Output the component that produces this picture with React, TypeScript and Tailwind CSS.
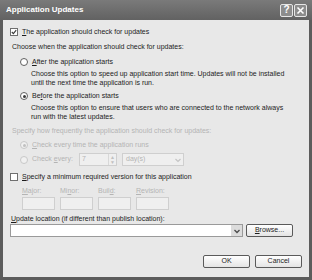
import React from 'react';

const font = { fontFamily: '"Liberation Sans", Arial, sans-serif' };

const Check = ({ checked, disabled }: { checked?: boolean; disabled?: boolean }) => (
  <span
    className={`flex h-[8px] w-[8px] shrink-0 items-center justify-center border ${
      disabled ? 'border-[#c4c4c4] bg-[#f2f2f2]' : 'border-[#6f6f6f] bg-white'
    }`}
  >
    {checked && (
      <svg width="6" height="6" viewBox="0 0 6 6">
        <path d="M0.8 3 L2.4 4.6 L5.2 1.2" fill="none" stroke="#3a3a3a" strokeWidth="1.1" />
      </svg>
    )}
  </span>
);

const Radio = ({ checked, disabled }: { checked?: boolean; disabled?: boolean }) => (
  <span
    className={`flex h-[8px] w-[8px] shrink-0 items-center justify-center rounded-full border ${
      disabled ? 'border-[#c8c8c8] bg-[#f0f0f0]' : 'border-[#5f5f5f] bg-white'
    }`}
  >
    {checked && (
      <span className={`h-[3px] w-[3px] rounded-full ${disabled ? 'bg-[#c0c0c0]' : 'bg-[#3a3a3a]'}`} />
    )}
  </span>
);

const Box = ({ w, children }: { w: string; children?: React.ReactNode }) => (
  <div className={`${w} h-[13px] border border-[#cfcfcf] bg-[#efefef]`}>{children}</div>
);

export default function App() {
  return (
    <div className="flex h-[280px] w-[312px] flex-col bg-[#5c5c5c] text-[7px] text-[#1c1c1c]" style={font}>
      {/* title bar */}
      <div className="flex h-[20px] shrink-0 items-center bg-gradient-to-b from-[#7a7a7a] to-[#626262] pl-[6px] pr-[5px]">
        <span className="text-[8px] font-bold text-white">Application Updates</span>
        <div className="ml-auto flex gap-[1px]">
          <div className="flex h-[13px] w-[13px] items-center justify-center rounded-[2px] border border-[#e6e6e6] bg-[#8c8c8c] text-[10px] font-bold leading-none text-white">
            ?
          </div>
          <div className="flex h-[13px] w-[13px] items-center justify-center rounded-[2px] border border-[#e6e6e6] bg-[#8c8c8c]">
            <svg width="9" height="9" viewBox="0 0 9 9">
              <path d="M1.5 1.5 L7.5 7.5 M7.5 1.5 L1.5 7.5" stroke="white" strokeWidth="1.6" />
            </svg>
          </div>
        </div>
      </div>

      {/* body */}
      <div className="mx-[3px] mb-[3px] flex flex-1 flex-col bg-[#e8e8e8] pl-[7px] pr-[4px]">
        <div className="mt-[7px] flex h-[10px] items-center gap-[4px]">
          <Check checked />
          <span>
            <u>T</u>he application should check for updates
          </span>
        </div>

        <div className="ml-[2px] mt-[5px] flex h-[10px] items-center">Choose when the application should check for updates:</div>

        <div className="ml-[10px] mt-[5px] flex h-[10px] items-center gap-[4px]">
          <Radio />
          <span>
            <u>A</u>fter the application starts
          </span>
        </div>
        <div className="ml-[21px] mt-[2px] leading-[9px]">
          Choose this option to speed up application start time. Updates will not be installed
          <br />
          until the next time the application is run.
        </div>

        <div className="ml-[10px] mt-[4px] flex h-[10px] items-center gap-[4px]">
          <Radio checked />
          <span>
            Be<u>f</u>ore the application starts
          </span>
        </div>
        <div className="ml-[21px] mt-[2px] leading-[9px]">
          Choose this option to ensure that users who are connected to the network always
          <br />
          run with the latest updates.
        </div>

        <div className="ml-[2px] mt-[5px] flex h-[10px] items-center text-[#b4b4b4]">
          Specify how frequently the application should check for updates:
        </div>

        <div className="ml-[10px] mt-[4px] flex h-[10px] items-center gap-[4px] text-[#b4b4b4]">
          <Radio checked disabled />
          <span>
            <u>C</u>heck every time the application runs
          </span>
        </div>

        <div className="ml-[10px] mt-[3px] flex h-[13px] items-center text-[#b4b4b4]">
          <Radio disabled />
          <span className="ml-[4px] w-[47px]">
            Check <u>e</u>very:
          </span>
          <div className="flex h-[13px] w-[38px] items-center border border-[#cfcfcf] bg-[#efefef] pl-[2px]">
            <span className="flex-1">7</span>
            <div className="flex h-full w-[8px] flex-col items-center justify-center border-l border-[#d8d8d8] text-[5px] leading-[5px] text-[#c0c0c0]">
              <span>▲</span>
              <span>▼</span>
            </div>
          </div>
          <div className="ml-[5px] flex h-[13px] w-[62px] items-center border border-[#cfcfcf] bg-[#efefef] pl-[3px]">
            <span className="flex-1">day(s)</span>
            <svg width="8" height="8" viewBox="0 0 8 8" className="mr-[1px]">
              <path d="M1.5 3 L4 5.5 L6.5 3" fill="none" stroke="#c4c4c4" strokeWidth="1.2" />
            </svg>
          </div>
        </div>

        <div className="mt-[6px] flex h-[10px] items-center gap-[4px]">
          <Check />
          <span>
            <u>S</u>pecify a minimum required version for this application
          </span>
        </div>

        <div className="ml-[12px] mt-[4px] flex h-[10px] items-center text-[#b4b4b4]">
          <span className="w-[38px]">
            <u>M</u>ajor:
          </span>
          <span className="w-[38px]">
            Mi<u>n</u>or:
          </span>
          <span className="w-[38px]">
            Buil<u>d</u>:
          </span>
          <span>
            <u>R</u>evision:
          </span>
        </div>
        <div className="ml-[12px] mt-[1px] flex gap-[5px]">
          <Box w="w-[33px]" />
          <Box w="w-[33px]" />
          <Box w="w-[33px]" />
          <Box w="w-[33px]" />
        </div>

        <div className="ml-[1px] mt-[4px] flex h-[10px] items-center">
          <span>
            <u>U</u>pdate location (if different than publish location):
          </span>
        </div>
        <div className="flex h-[13px] items-center">
          <div className="flex h-[13px] w-[233px] items-center justify-end border border-[#9a9a9a] bg-white">
            <div className="flex h-[11px] w-[11px] items-center justify-center bg-[#dcdcdc]">
              <svg width="8" height="8" viewBox="0 0 8 8">
                <path d="M1.5 3 L4 5.5 L6.5 3" fill="none" stroke="#4a4a4a" strokeWidth="1.3" />
              </svg>
            </div>
          </div>
          <div className="ml-[3px] flex h-[13px] w-[47px] items-center justify-center rounded-[2px] border border-[#5a5a5a] bg-gradient-to-b from-white to-[#e4e4e4]">
            <span>
              <u>B</u>rowse...
            </span>
          </div>
        </div>

        <div className="mt-[18px] flex justify-end gap-[5px] pr-[3px]">
          <div className="flex h-[13px] w-[47px] items-center justify-center rounded-[2px] border border-[#5a5a5a] bg-gradient-to-b from-white to-[#e4e4e4]">
            OK
          </div>
          <div className="flex h-[13px] w-[47px] items-center justify-center rounded-[2px] border border-[#5a5a5a] bg-gradient-to-b from-white to-[#e4e4e4]">
            Cancel
          </div>
        </div>
      </div>
    </div>
  );
}
